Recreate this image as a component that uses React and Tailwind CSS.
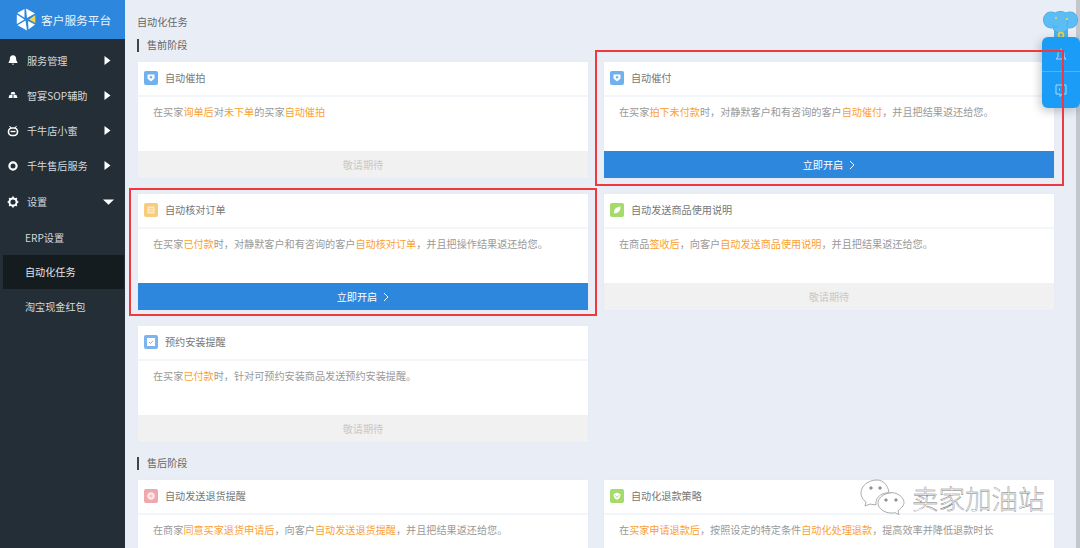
import React from 'react';

const font = "font-['Noto_Sans_CJK_SC','Liberation_Sans',sans-serif]";

const menu = [
  { label: '服务管理', icon: 'bell' },
  { label: '智宴SOP辅助', icon: 'cloud' },
  { label: '千牛店小蜜', icon: 'robot' },
  { label: '千牛售后服务', icon: 'ring' },
];

const MenuIcon = ({ type }) => {
  if (type === 'bell') {
    return (
      <svg width="12" height="12" viewBox="0 0 12 12" fill="#fff">
        <path d="M6 1.200c-2 0-3.100 1.500-3.100 3.400 0 2-.7 2.900-1.300 3.600v.8h8.800v-.8C9.800 7.500 9.100 6.600 9.100 4.600 9.100 2.700 8 1.200 6 1.200z" />
        <path d="M4.800 9.700h2.400L6 11z" />
      </svg>
    );
  }
  if (type === 'cloud') {
    return (
      <svg width="12" height="12" viewBox="0 0 12 12" fill="#fff">
        <path d="M4.500 3h3l1 2.500h-5z" />
        <path d="M2.500 6h3v3h-4zM6.500 6h3l1 3h-4z" />
      </svg>
    );
  }
  if (type === 'robot') {
    return (
      <svg width="12" height="12" viewBox="0 0 12 12" fill="none" stroke="#fff">
        <rect x="1.500" y="3" width="9" height="7.500" rx="3.500" strokeWidth="1.600" />
        <path d="M3.500 6.500h5" strokeWidth="1.400" />
        <path d="M2.500 1l1.500 2M9.500 1L8 3" strokeWidth="1" />
      </svg>
    );
  }
  if (type === 'gear') {
    return (
      <svg width="12" height="12" viewBox="0 0 12 12">
        <circle cx="6" cy="6" r="3.600" fill="none" stroke="#fff" strokeWidth="2" />
        <path d="M6 .6v2M6 9.400v2M.6 6h2M9.400 6h2M2.200 2.200l1.400 1.400M8.400 8.400l1.400 1.400M9.800 2.200L8.400 3.600M3.600 8.400L2.200 9.800" stroke="#fff" strokeWidth="1.700" />
      </svg>
    );
  }
  return (
    <svg width="12" height="12" viewBox="0 0 12 12" fill="none" stroke="#fff" strokeWidth="2.200">
      <circle cx="6" cy="6" r="3.600" />
    </svg>
  );
};

const Caret = () => (
  <svg width="7" height="11" viewBox="0 0 7 11" fill="#fff">
    <path d="M.5 1L6.500 5.500.5 10z" />
  </svg>
);

const CardIcon = ({ bg, children }) => (
  <span className={`flex h-[14px] w-[14px] shrink-0 items-center justify-center rounded-[2px] ${bg}`}>
    <svg width="10" height="10" viewBox="0 0 10 10">{children}</svg>
  </span>
);

const icons = {
  blueDown: (
    <CardIcon bg="bg-[#6fb0ee]">
      <path d="M1.500 1.500h7v4L5 8.500l-3.500-3z" fill="#fff" />
      <circle cx="5" cy="4.200" r="1.200" fill="#6fb0ee" />
    </CardIcon>
  ),
  orange: (
    <CardIcon bg="bg-[#f9cb7d]">
      <rect x="1.500" y="1.500" width="7" height="7" fill="#fde9c6" />
      <path d="M3 3.500h4M3 5h4M3 6.500h4" stroke="#f9cb7d" strokeWidth=".7" />
    </CardIcon>
  ),
  leaf: (
    <CardIcon bg="bg-[#a5db6b]">
      <path d="M2 8.500C1.800 4.500 4 1.800 8.500 1.500 8.500 6 6.500 8.300 2.500 8.300z" fill="#fff" />
    </CardIcon>
  ),
  check: (
    <CardIcon bg="bg-[#7db3ee]">
      <rect x="1" y="1" width="8" height="8" fill="#fff" />
      <path d="M3 5l1.500 1.500L7 3.800" stroke="#7db3ee" fill="none" />
    </CardIcon>
  ),
  pink: (
    <CardIcon bg="bg-[#f0a7ae]">
      <circle cx="5" cy="5" r="3.800" fill="#fde6e8" />
      <path d="M3.500 5h3M5 3.500v3" stroke="#f0a7ae" strokeWidth=".7" />
    </CardIcon>
  ),
  green: (
    <CardIcon bg="bg-[#a5db6b]">
      <path d="M1.500 3.200L5 1.500l3.500 1.700c0 3-1.200 4.800-3.500 5.500-2.300-.7-3.500-2.500-3.500-5.500z" fill="#fff" />
      <path d="M3.300 4.300c.3 2 3.100 2 3.400 0" stroke="#a5db6b" fill="none" />
    </CardIcon>
  ),
};

// highlighted (orange) part of the sentence
const H = ({ children }) => <span className="text-[#fb9f33]">{children}</span>;

const Card = ({ icon, title, children, action }) => (
  <div className="flex h-[118px] w-[452px] flex-col bg-white outline outline-1 -outline-offset-1 outline-[#e6ebf4]">
    <div className="flex h-[36px] shrink-0 items-center gap-[7px] border-b-2 border-[#f2f6fb] pl-[7px] text-[10.150px] text-[#777]">
      {icon}
      <span>{title}</span>
    </div>
    <p className="h-[54px] shrink-0 pl-4 pt-[7px] text-[10.150px] leading-[16px] text-[#999]">{children}</p>
    {action === 'on' && (
      <div className="flex h-[27px] items-center justify-center gap-[6px] bg-[#2d87dd] text-[10.150px] text-white">
        <span>立即开启</span>
        <svg width="6" height="10" viewBox="0 0 6 10" fill="none" stroke="#fff">
          <path d="M1 1l4 4-4 4" />
        </svg>
      </div>
    )}
    {action === 'wait' && (
      <div className="flex h-[27px] items-center justify-center bg-[#f1f1f1] text-[10.150px] text-[#c8c8c8]">敬请期待</div>
    )}
  </div>
);

const Section = ({ children }) => (
  <div className="flex h-[13px] items-center border-l-2 border-[#444] pb-[1px] pl-[8px] text-[10.150px] text-[#666]">{children}</div>
);

export default function App() {
  return (
    <div className={`relative flex h-[548px] w-[1080px] overflow-hidden bg-[#e9eef6] ${font}`}>
      {/* Sidebar */}
      <aside className="w-[125px] shrink-0 bg-[#232e37]">
        <div className="flex h-[39px] items-center gap-[5px] bg-[#2d87dd] pl-4 text-[11.700px] text-[#e8f2fc]">
          <svg width="20" height="23" viewBox="0 0 20 23">
            <path d="M10 .5l9 5-8 4.500z" fill="#fff" />
            <path d="M8.500 .9L1.200 5l7.300 4.800z" fill="#fff" />
            <path d="M.8 6.500l7.700 5L.8 16z" fill="#fff" />
            <path d="M1.500 17.200l8-4.600 1.500 9.900z" fill="#fff" />
            <path d="M12 13l7 3.500-6.500 5z" fill="#fff" />
            <path d="M19.300 7v8L13 11.500z" fill="#f3d44a" />
          </svg>
          <span>客户服务平台</span>
        </div>
        <nav className="pt-[3.500px] text-[10.150px] text-[#d5d9dc]">
          {menu.map((m) => (
            <div key={m.label} className="flex h-[35.250px] items-center pl-[7px] pr-[14px]">
              <MenuIcon type={m.icon} />
              <span className="ml-[8px] flex-1">{m.label}</span>
              <Caret />
            </div>
          ))}
          <div className="flex h-[36.250px] items-center pl-[7px] pr-[11px]">
            <MenuIcon type="gear" />
            <span className="ml-[8px] flex-1">设置</span>
            <svg width="11" height="6" viewBox="0 0 11 6" fill="#fff">
              <path d="M0 .5h11L5.500 5.800z" />
            </svg>
          </div>
          <div className="flex h-[34.750px] items-center pl-[25px]">ERP设置</div>
          <div className="ml-[3px] mr-[1px] flex h-[34.750px] items-center bg-[#151c20] pl-[22px] text-[#e3e6e8]">自动化任务</div>
          <div className="flex h-[34.750px] items-center pl-[25px]">淘宝现金红包</div>
        </nav>
      </aside>

      {/* Content */}
      <main className="flex-1 pl-3 pt-[15px]">
        <div className="h-[24px] text-[10.150px] leading-[14px] text-[#666]">自动化任务</div>
        <Section>售前阶段</Section>
        <div className="mt-[9px] grid w-[918px] grid-cols-[452px_452px] gap-x-[14px] gap-y-[14px]">
          <Card icon={icons.blueDown} title="自动催拍" action="wait">
            在买家<H>询单后</H>对<H>未下单</H>的买家<H>自动催拍</H>
          </Card>
          <Card icon={icons.blueDown} title="自动催付" action="on">
            在买家<H>拍下未付款</H>时，对静默客户和有咨询的客户<H>自动催付</H>，并且把结果返还给您。
          </Card>
          <Card icon={icons.orange} title="自动核对订单" action="on">
            在买家<H>已付款</H>时，对静默客户和有咨询的客户<H>自动核对订单</H>，并且把操作结果返还给您。
          </Card>
          <Card icon={icons.leaf} title="自动发送商品使用说明" action="wait">
            在商品<H>签收后</H>，向客户<H>自动发送商品使用说明</H>，并且把结果返还给您。
          </Card>
          <Card icon={icons.check} title="预约安装提醒" action="wait">
            在买家<H>已付款</H>时，针对可预约安装商品发送预约安装提醒。
          </Card>
        </div>
        <div className="mt-[14px]">
          <Section>售后阶段</Section>
        </div>
        <div className="mt-[9px] grid w-[918px] grid-cols-[452px_452px] gap-x-[14px]">
          <Card icon={icons.pink} title="自动发送退货提醒">
            在商家<H>同意买家退货申请后</H>，向客户<H>自动发送退货提醒</H>，并且把结果返还给您。
          </Card>
          <Card icon={icons.green} title="自动化退款策略">
            在<H>买家申请退款后</H>，按照设定的特定条件<H>自动化处理退款</H>，提高效率并降低退款时长
          </Card>
        </div>
      </main>

      {/* Scrollbar */}
      <div className="absolute right-0 top-0 h-full w-[4px] bg-[#c3c6cb]" />

      {/* Floating helper */}
      <svg className="absolute left-[1043px] top-[11px]" width="35" height="27" viewBox="0 0 35 27">
        <path d="M11 27h14v-9H11z" fill="#4fb0e8" />
        <g fill="#3ea3e0">
          <ellipse cx="8" cy="9" rx="8" ry="8.500" />
          <ellipse cx="27" cy="9" rx="8" ry="8.500" />
          <ellipse cx="17.500" cy="11" rx="10" ry="11" />
        </g>
        <g fill="#5cbdf5">
          <ellipse cx="8" cy="9" rx="7.500" ry="8" />
          <ellipse cx="27" cy="9" rx="7.500" ry="8" />
          <ellipse cx="17.500" cy="11" rx="9.500" ry="10.500" />
        </g>
        <path d="M9 14c1.500 2 4 2.500 6 2M24 8c1 3 .5 6-1 8" fill="none" stroke="#3ea3e0" strokeWidth=".6" />
        <circle cx="13" cy="7" r="1" fill="#f2e14b" />
        <circle cx="24" cy="8" r="1" fill="#f2e14b" />
        <circle cx="18" cy="24" r="2.500" fill="none" stroke="#f2d64b" strokeWidth="1.600" />
      </svg>
      <div className="absolute right-0 top-[37px] flex h-[71px] w-[38px] flex-col rounded-[6px] bg-[#1b9cf7] shadow-[-2px_3px_10px_rgba(0,0,0,0.22)]">
        <div className="flex h-[35px] items-center justify-center border-b border-[#4fb3f9]">
          <svg width="14" height="15" viewBox="0 0 14 15" fill="none" stroke="#a8dafc">
            <path d="M7 1.500v2M4 6.500C4 5 5.500 4 7 4s3 1 3 2.500V10l2 2H2l2-2z" />
          </svg>
        </div>
        <div className="flex flex-1 items-center justify-center">
          <svg width="14" height="15" viewBox="0 0 14 15" fill="none" stroke="#a8dafc">
            <path d="M2 2h10v9H8l-2 2.500V11H2z" />
            <path d="M5.500 5.500v2M8.500 5.500v2" />
          </svg>
        </div>
      </div>

      {/* Red highlight frames */}
      <div className="absolute left-[595px] top-[50px] h-[136px] w-[469px] border-2 border-[#f0393e]" />
      <div className="absolute left-[129px] top-[188px] h-[128px] w-[468px] border-2 border-[#f0393e]" />

      {/* Watermark */}
      <div className="absolute left-[860px] top-[479px] flex items-center gap-[6px]">
        <svg width="46" height="39" viewBox="0 0 46 39" fill="#fff" stroke="#8a8a8a" strokeWidth=".7">
          <path d="M17 1C8 1 1 7 1 14c0 4 2 7 5 9l-1 4 5-2c2 .6 4 .8 6 .7-1-6 4-12 13-12C28 6 23 1 17 1z" />
          <path d="M31 14c-7 0-13 5-13 10s6 10 13 10c2 0 3 0 4-.4l4 2-1-4c3-2 6-5 6-8 0-5-6-10-13-10z" />
          <circle cx="11" cy="9" r="1.300" fill="#999" />
          <circle cx="20" cy="9" r="1.300" fill="#999" />
          <circle cx="26" cy="21" r="1.300" fill="#999" />
          <circle cx="36" cy="21" r="1.300" fill="#999" />
        </svg>
        <span className="text-[26.500px] font-light leading-none text-white [-webkit-text-stroke:0.4px_#777]">卖家加油站</span>
      </div>
    </div>
  );
}
